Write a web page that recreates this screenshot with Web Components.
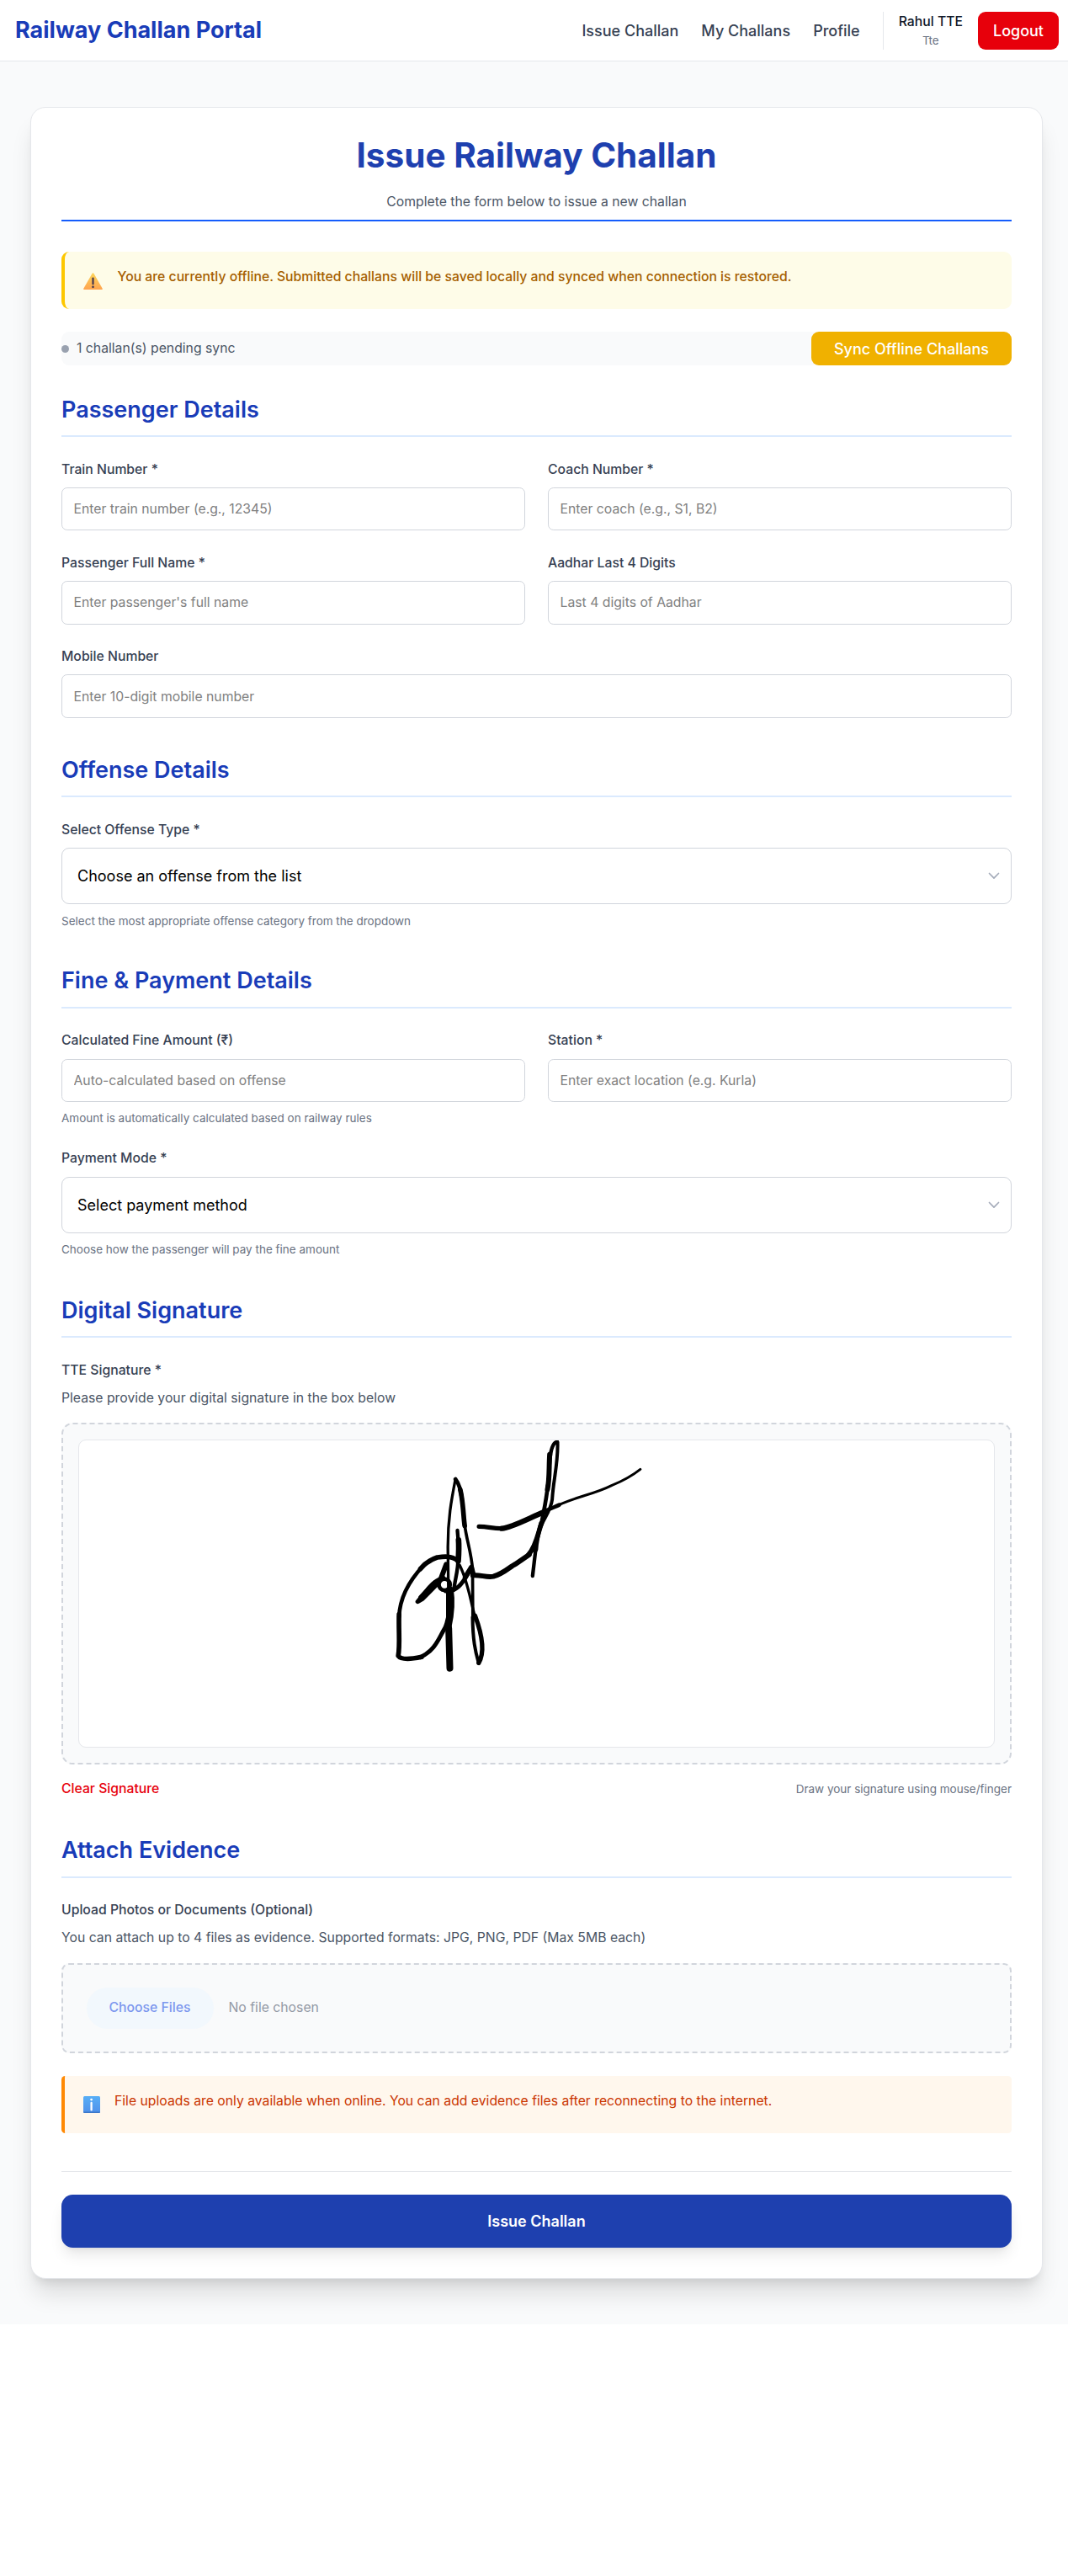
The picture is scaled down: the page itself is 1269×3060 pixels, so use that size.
<!DOCTYPE html>
<html lang="en">
<head>
<meta charset="utf-8">
<title>Railway Challan Portal</title>
<style>
body{margin:0;background:#fff;font-family:Inter,"Liberation Sans",sans-serif;font-size:15.75px;line-height:22.5px;color:#364153}
</style>
</head>
<body>
<challan-page></challan-page>
<script>
const define = (name, css, html) => customElements.define(name, class extends HTMLElement {
  constructor() {
    super();
    const t = document.createElement('template');
    t.innerHTML = `<style>*{box-sizing:border-box}${css}</style>` + (typeof html === 'function' ? html(this) : html);
    this.attachShadow({mode: 'open'}).append(t.content.cloneNode(true));
  }
});

define('portal-header', `
:host{display:flex;box-sizing:border-box;height:73px;padding:0 11px 0 18px;background:#fff;border-bottom:1px solid #e5e7eb;align-items:center;justify-content:space-between}
.brand{font-size:27px;line-height:36px;font-weight:700;color:#193cb8}
nav{display:flex;align-items:center;gap:27px;font-size:18px;line-height:27px;font-weight:500}
.user{display:flex;gap:18px;border-left:1px solid #e5e7eb;padding-left:18px;height:45px}
.who{padding-top:1px;font-size:15.75px;line-height:22.5px;color:#101828;text-align:center}
.who small{display:block;font-size:13.5px;font-weight:400;color:#6a7282}
button{font:500 18px/27px Inter,sans-serif;color:#fff;background:#e7000b;border:0;border-radius:9px;padding:0 18px;height:45px}
`, `<span class="brand">Railway Challan Portal</span>
<nav><span>Issue Challan</span><span>My Challans</span><span>Profile</span>
<div class="user"><div class="who">Rahul TTE<small>Tte</small></div><button>Logout</button></div></nav>`);

define('notice-box', `
:host{display:flex;box-sizing:border-box;height:68px;padding:18.75px 22px;border-left:4px solid #fdc700;border-radius:9px;background:#fefce8;color:#a65f00;font-weight:500}
:host([kind=info]){border-color:#ff8904;border-radius:4.5px;background:#fff7ed;color:#ca3500;font-weight:400;margin-top:27px}
svg{flex:none;width:23px;height:20px;margin:6.5px 17.6px 0 0}
:host([kind=info]) svg{width:20px;height:20px;margin:5px 17px 0 0}
`, el => (el.getAttribute('kind') === 'info' ? `
<svg viewBox="0 0 20 20"><defs><linearGradient id="g" x2="0" y2="1"><stop stop-color="#58aef6"/><stop offset="1" stop-color="#4f90ea"/></linearGradient></defs><rect width="20" height="20" rx="1.5" fill="url(#g)"/><path d="M0 18.5h20a1.5 1.5 0 0 1-1.5 1.5h-17A1.5 1.5 0 0 1 0 18.5" fill="#3b77c9"/><circle cx="9.6" cy="4.1" r="1.4" fill="#fff"/><path d="M9.6 8v8.4" stroke="#fff" stroke-width="2.3" stroke-linecap="round"/></svg>` : `
<svg viewBox="0 0 23 20"><defs><linearGradient id="g" x2="0" y2="1"><stop stop-color="#fcd55c"/><stop offset="1" stop-color="#ffa44f"/></linearGradient></defs><path d="M10.6.7a1 1 0 0 1 1.8 0l10.3 18a.9.9 0 0 1-.8 1.3H1.1a.9.9 0 0 1-.8-1.3z" fill="url(#g)"/><path d="M11.5 6.6v6.7" stroke="#4b3c50" stroke-width="2.3" stroke-linecap="round"/><circle cx="11.5" cy="16.8" r="1.4" fill="#4b3c50"/></svg>`) + '<span><slot></slot></span>');

define('sync-bar', `
:host{display:flex;height:40px;margin-top:27px;background:#f9fafb;border-radius:9px;align-items:center;justify-content:space-between;color:#4a5565}
.state{display:flex;align-items:center;gap:9px}
i{width:9px;height:9px;border-radius:50%;background:#99a1af}
button{font:500 18px/27px Inter,sans-serif;height:40px;width:238px;padding:0;color:#fff;background:#f0b100;border:0;border-radius:9px}
`, `<span class="state"><i></i><slot></slot></span><button>Sync Offline Challans</button>`);

define('form-section', `
:host{display:block;margin-top:43.8px}
:host([first]){margin-top:35.3px;--label-drop:.8px}
:host([first]) h2{padding-bottom:11.7px}
h2{margin:0 0 27.3px;font-size:27px;line-height:36px;font-weight:600;color:#193cb8;padding-bottom:12.7px;border-bottom:2px solid #dbeafe}
.body{display:grid;grid-template-columns:1fr 1fr;gap:27px}
`, el => `<h2>${el.getAttribute('heading')}</h2><div class="body"><slot></slot></div>`);

define('form-field', `
:host{display:block}
:host([wide]){grid-column:1/-1}
label{display:block;height:32.8px;padding-top:var(--label-drop,0);font-weight:500}
input,select{display:block;width:100%;margin:0;font-family:inherit;background:#fff;border:1px solid #d1d5dc;appearance:none}
input{height:51.4px;font-size:15.75px;padding:0 13.5px;border-radius:6.75px}
input::placeholder{color:#808080;opacity:1}
.pick{display:grid;align-items:center}
.pick>*{grid-area:1/1}
select{height:67px;font-size:18px;padding:0 18px;border-radius:9px;color:#000;opacity:1}
svg{justify-self:end;width:14px;height:9px;margin-right:14.5px;pointer-events:none}
p{margin:10.2px 0 0;font-size:13.5px;line-height:18px;color:#6a7282}
`, el => {
  const a = n => el.getAttribute(n);
  const control = a('choice')
    ? `<div class="pick"><select><option>${a('choice')}</option></select><svg viewBox="0 0 14 9"><path d="m1.5 1.5 5.5 5.6 5.5-5.6" fill="none" stroke="#a5acba" stroke-width="1.7" stroke-linecap="round" stroke-linejoin="round"/></svg></div>`
    : `<input placeholder="${a('hint')}">`;
  return `<label>${a('label')}</label>${control}${a('help') ? `<p>${a('help')}</p>` : ''}`;
});

define('signature-pad', `
:host{display:block;grid-column:1/-1}
label{display:block;font-weight:500;margin-bottom:10.6px}
.note{color:#4a5565}
.frame{margin-top:18px;height:405.4px;padding:18px;border:2px dashed #d1d5dc;border-radius:13.5px;background:#f9fafb}
.canvas{height:100%;border:1px solid #e5e7eb;border-radius:9px;background:#fff;overflow:hidden}
svg{display:block;width:1087px;height:363px}
.foot{display:flex;justify-content:space-between;align-items:center;margin-top:18px}
.clear{color:#e7000b;font-weight:500}
.tip{font-size:13.5px;color:#6a7282}
`, `<label>TTE Signature *</label><div class="note">Please provide your digital signature in the box below</div>
<div class="frame"><div class="canvas"><svg viewBox="0 0 1087 363"><g transform="translate(345.5 -20) scale(.33333)" fill="none" stroke="#000" stroke-linecap="round" stroke-linejoin="round">
<path stroke-width="10" d="M305 198C290 275 278 340 278 440L280 600"/>
<path stroke-width="18" d="M289 590C297 640 292 680 282 725"/>
<path stroke-width="19" d="M281 600L281 740"/>
<path stroke-width="24" d="M281 730L285 872"/>
<path stroke-width="14" d="M305 198C318 215 325 240 328 270"/>
<path stroke-width="17" d="M322 235C333 280 333 330 338 365"/>
<path stroke-width="11" d="M338 360C343 410 362 460 366 520L367 700"/>
<path stroke-width="12" d="M366 690C367 770 375 810 388 855"/>
<path stroke-width="16" d="M388 853C410 815 403 760 375 685"/>
<path stroke-width="10" d="M375 690C356 620 348 560 320 505"/>
<path stroke-width="17" d="M312 488C290 470 262 474 240 477C215 485 195 500 180 518"/>
<path stroke-width="14" d="M190 507C145 555 106 620 104 690"/>
<path stroke-width="17" d="M104 680C102 740 108 790 101 828C112 844 150 839 184 832"/>
<path stroke-width="15" d="M180 833C236 805 245 765 268 728C277 708 278 690 284 670"/>
<path stroke-width="13" d="M312 381L316 430"/>
<path stroke-width="20" d="M316 415C318 440 317 460 315 490"/>
<path stroke-width="13" d="M314 480C316 525 301 560 300 592"/>
<path stroke-width="15" d="M170 635L205 592C225 566 240 555 262 550M171 635L188 625L240 572"/>
<path stroke-width="22" d="M184 620L232 570"/>
<path stroke-width="18" d="M254 550L272 502"/>
<circle stroke-width="14" cx="266" cy="574" r="20"/>
<path stroke-width="15" d="M270 597C308 600 330 570 347 538"/>
<path stroke-width="18" d="M340 548L362 512L369 540"/>
<path stroke-width="18" d="M367 541C395 538 415 550 440 545C480 533 500 509 520 500L568 467"/>
<path stroke-width="17" d="M565 468C595 434 600 385 612 355"/>
<path stroke-width="12" d="M608 370C622 335 645 310 650 270C653 205 672 140 669 66"/>
<path stroke-width="14" d="M667 66C650 68 643 100 640 145"/>
<path stroke-width="18" d="M641 110C638 150 641 200 633 235"/>
<path stroke-width="14" d="M634 220C630 270 618 320 611 360"/>
<path stroke-width="15" d="M610 355C598 400 593 420 592 450"/>
<path stroke-width="13" d="M592 440L580 543"/>
<path stroke-width="16" d="M389 367C425 367 450 378 480 373"/>
<path stroke-width="19" d="M470 374C510 370 570 335 628 312"/>
<path stroke-width="14" d="M615 318C640 302 660 298 675 290"/>
<path stroke-width="9" d="M665 294C730 262 800 252 863 220C905 203 935 186 964 163"/>
</g></svg></div></div>
<div class="foot"><span class="clear">Clear Signature</span><span class="tip">Draw your signature using mouse/finger</span></div>`);

define('evidence-upload', `
:host{display:block;grid-column:1/-1}
label{display:block;font-weight:500;margin-bottom:10.6px}
.note{color:#4a5565}
.drop{display:flex;align-items:center;gap:18px;margin-top:18.5px;height:107.6px;padding:0 27.5px;border:2px dashed #d1d5dc;border-radius:9px;background:#f9fafb;color:#9399a5}
button{font:500 15.75px/22.5px Inter,sans-serif;color:#7c97ee;background:#f2f8fd;border:0;border-radius:25px;width:151px;height:49px;padding:0}
`, `<label>Upload Photos or Documents (Optional)</label><div class="note">You can attach up to 4 files as evidence. Supported formats: JPG, PNG, PDF (Max 5MB each)</div>
<div class="drop"><button>Choose Files</button><span>No file chosen</span></div>
<notice-box kind="info">File uploads are only available when online. You can add evidence files after reconnecting to the internet.</notice-box>`);

define('submit-bar', `
:host{display:block;margin-top:45px;padding-top:26.5px;border-top:1px solid #e5e7eb}
button{display:block;width:100%;height:63px;border:0;border-radius:13.5px;background:#1e40af;color:#fff;font:600 18px/27px Inter,sans-serif;box-shadow:0 11.25px 16.9px -3.4px rgba(0,0,0,.1),0 4.5px 6.75px -4.5px rgba(0,0,0,.1)}
`, `<button><slot></slot></button>`);

define('challan-card', `
:host{display:block;background:#fff;border:1px solid #e5e7eb;border-radius:18px;padding:36px;box-shadow:0 22.5px 28px -5.6px rgba(0,0,0,.12),0 9px 11.25px -6.75px rgba(0,0,0,.1)}
header{text-align:center;border-bottom:2px solid #155dfc;padding-bottom:9.75px;margin-bottom:36px}
h1{margin:0;padding-top:1px;font-size:40.5px;line-height:40.5px;font-weight:700;color:#1e40af}
header p{margin:23.25px 0 0;color:#4a5565}
`, `<header><h1>Issue Railway Challan</h1><p>Complete the form below to issue a new challan</p></header><slot></slot>`);

define('challan-page', `
:host{display:block}
main{background:#f9fafb;padding:54px 30px 54px 36px}
.fine{margin-top:44.5px}
.pay{margin-top:1px}
.sign{margin-top:45.1px}
`, `<portal-header></portal-header>
<main><challan-card>
<notice-box>You are currently offline. Submitted challans will be saved locally and synced when connection is restored.</notice-box>
<sync-bar>1 challan(s) pending sync</sync-bar>
<form-section first heading="Passenger Details">
<form-field label="Train Number *" hint="Enter train number (e.g., 12345)"></form-field>
<form-field label="Coach Number *" hint="Enter coach (e.g., S1, B2)"></form-field>
<form-field label="Passenger Full Name *" hint="Enter passenger's full name"></form-field>
<form-field label="Aadhar Last 4 Digits" hint="Last 4 digits of Aadhar"></form-field>
<form-field wide label="Mobile Number" hint="Enter 10-digit mobile number"></form-field>
</form-section>
<form-section heading="Offense Details">
<form-field wide label="Select Offense Type *" choice="Choose an offense from the list" help="Select the most appropriate offense category from the dropdown"></form-field>
</form-section>
<form-section class="fine" heading="Fine &amp; Payment Details">
<form-field label="Calculated Fine Amount (₹)" hint="Auto-calculated based on offense" help="Amount is automatically calculated based on railway rules"></form-field>
<form-field label="Station *" hint="Enter exact location (e.g. Kurla)"></form-field>
<form-field class="pay" wide label="Payment Mode *" choice="Select payment method" help="Choose how the passenger will pay the fine amount"></form-field>
</form-section>
<form-section class="sign" heading="Digital Signature"><signature-pad></signature-pad></form-section>
<form-section heading="Attach Evidence"><evidence-upload></evidence-upload></form-section>
<submit-bar>Issue Challan</submit-bar>
</challan-card></main>`);
</script>
</body>
</html>
